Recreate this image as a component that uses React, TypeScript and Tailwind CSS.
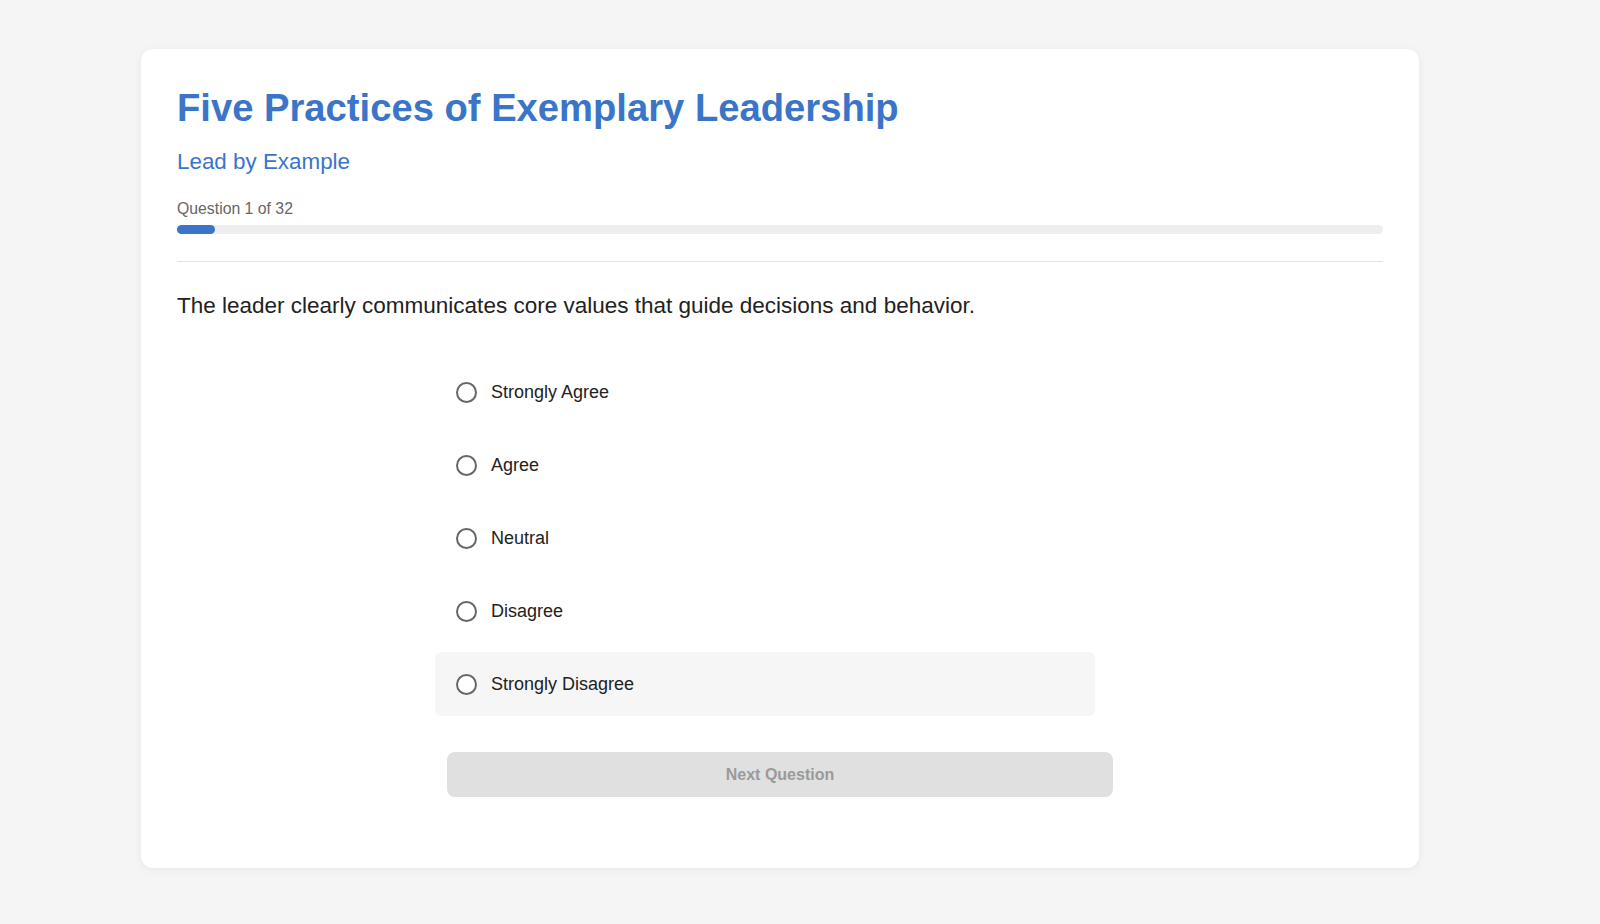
import React from "react";

const options = ["Strongly Agree", "Agree", "Neutral", "Disagree", "Strongly Disagree"];

export default function App() {
  return (
    <div
      className="min-h-[924px] w-full bg-[#f5f5f5] pt-[49px] pb-[56px]"
      style={{ fontFamily: '"Liberation Sans", Arial, Helvetica, sans-serif' }}
    >
      <div className="ml-[141px] w-[1278px] rounded-[12px] bg-white px-[36px] pt-[36px] pb-[71px] shadow-[0_2px_10px_rgba(0,0,0,0.06)]">
        <h1 className="text-[38.2px] font-bold leading-[46px] text-[#3a75c8]">
          Five Practices of Exemplary Leadership
        </h1>
        <h2 className="mt-[18px] text-[22.4px] leading-[26px] text-[#3a75c8]">Lead by Example</h2>
        <div className="mt-[25px] text-[15.8px] leading-[18px] text-[#666666]">Question 1 of 32</div>
        <div className="mt-[7px] h-[9px] w-full rounded-full bg-[#eeeeee]">
          <div className="h-full rounded-full bg-[#3a75c8]" style={{ width: `${(1 / 32) * 100}%` }} />
        </div>
        <div className="mt-[27px] border-t border-[#e3e3e3]" />
        <p className="mt-[31px] text-[22.5px] leading-[26px] text-[#222222]">
          The leader clearly communicates core values that guide decisions and behavior.
        </p>
        <div className="ml-[258px] mt-[41px] flex w-[660px] flex-col gap-[9px]">
          {options.map((o, i) => (
            <label
              key={o}
              className={`flex h-[64px] cursor-pointer items-center gap-[14px] rounded-[6px] pl-[21px] ${
                i === options.length - 1 ? "bg-[#f6f6f6]" : ""
              }`}
            >
              <span className="h-[21px] w-[21px] shrink-0 rounded-full border-2 border-[#666666] bg-white" />
              <span className="text-[18px] leading-[22px] text-[#222222]">{o}</span>
            </label>
          ))}
        </div>
        <button
          disabled
          className="ml-[270px] mt-[36px] flex h-[45px] w-[666px] items-center justify-center rounded-[8px] bg-[#e0e0e0] text-[16px] font-bold text-[#9a9a9a]"
        >
          Next Question
        </button>
      </div>
    </div>
  );
}
